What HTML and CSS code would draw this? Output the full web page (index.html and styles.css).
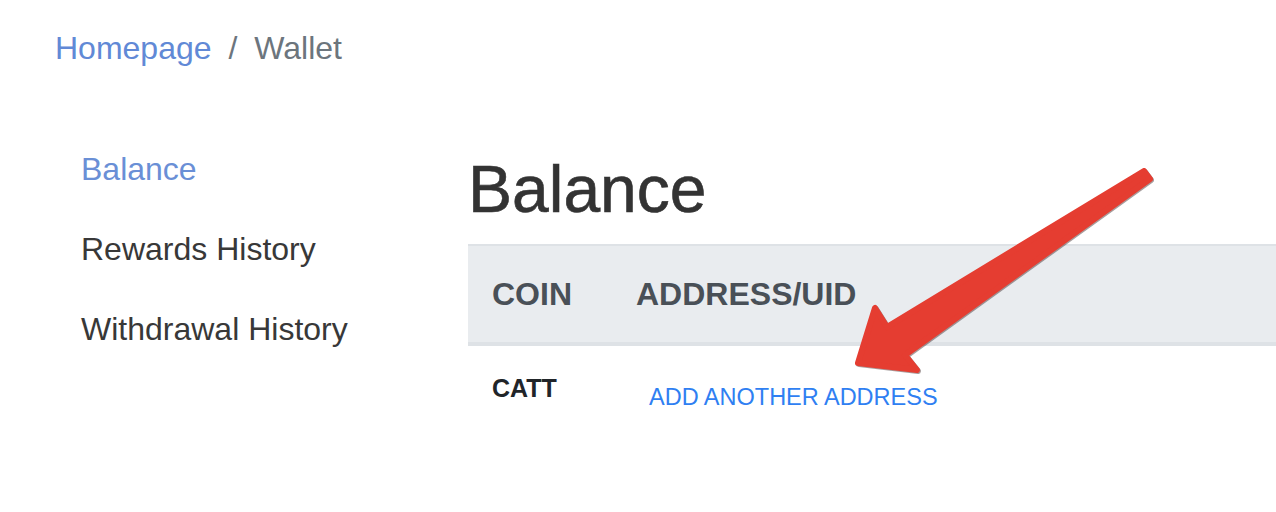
FILE: index.html
```html
<!DOCTYPE html>
<html lang="en">
<head>
    <meta charset="UTF-8">
    <meta name="viewport" content="width=device-width, initial-scale=1.0">
    <title>Wallet</title>
    <link rel="stylesheet" href="styles.css">
</head>
<body>
    <nav class="breadcrumb">
        <a href="#" class="crumb-link">Homepage</a>
        <span class="crumb-sep">/</span>
        <span class="crumb-current">Wallet</span>
    </nav>

    <div class="page">
        <ul class="sidebar">
            <li><a href="#" class="side-link active">Balance</a></li>
            <li><a href="#" class="side-link">Rewards History</a></li>
            <li><a href="#" class="side-link">Withdrawal History</a></li>
        </ul>

        <main class="content">
            <h2 class="title">Balance</h2>
            <table class="balance-table">
                <thead>
                    <tr>
                        <th class="col-coin">COIN</th>
                        <th>ADDRESS/UID</th>
                    </tr>
                </thead>
                <tbody>
                    <tr>
                        <td class="coin-name">CATT</td>
                        <td><a href="#" class="add-link">ADD ANOTHER ADDRESS</a></td>
                    </tr>
                </tbody>
            </table>
        </main>
    </div>

    <!-- annotation arrow drawn over the page -->
    <svg class="arrow" width="1276" height="512" viewBox="0 0 1276 512">
        <polygon points="1144,171 887,327 875,308 858,363 917,370 905,355 1150,179"
                 fill="#e53d31" stroke="#e53d31" stroke-width="6" stroke-linejoin="round"/>
    </svg>
</body>
</html>
```

FILE: styles.css
```css
body {
    font-family: 'Liberation Sans', Arial, sans-serif;
    margin: 0;
    padding: 0;
    color: #333333;
    background-color: #ffffff;
    position: relative;
    width: 1276px;
    height: 512px;
    overflow: hidden;
}

a {
    text-decoration: none;
}

.breadcrumb {
    padding: 24px 0 0 55px;
    font-size: 32px;
    line-height: 48px;
}

.crumb-link {
    color: #6189d6;
}

.crumb-sep {
    color: #6c757d;
    padding: 0 8px;
}

.crumb-current {
    color: #6c757d;
}

.page {
    display: flex;
    margin-top: 57px;
}

.sidebar {
    list-style: none;
    margin: 0;
    padding: 16px 0 0 81px;
    width: 468px;
    box-sizing: border-box;
    flex-shrink: 0;
}

.side-link {
    display: block;
    font-size: 32px;
    line-height: 48px;
    padding: 0 0 32px;
    color: #383838;
}

.side-link.active {
    color: #6a8fd6;
}

.content {
    flex: 1;
    min-width: 0;
    padding-top: 22px;
}

.title {
    margin: 0 0 16px;
    font-size: 66px;
    font-weight: 500;
    line-height: 77px;
    color: #333333;
    -webkit-text-stroke: 0.6px #333333;
}

.balance-table {
    width: 100%;
    border-collapse: collapse;
}

.balance-table th {
    text-align: left;
    font-size: 32px;
    line-height: 48px;
    font-weight: bold;
    color: #495057;
    background-color: #e9ecef;
    padding: 24px;
    border-top: 2px solid #dee2e6;
    border-bottom: 4px solid #dee2e6;
}

.balance-table th.col-coin {
    width: 96px;
}

.balance-table td {
    padding: 24px;
    vertical-align: top;
}

.coin-name {
    font-size: 25px;
    line-height: 37px;
    font-weight: bold;
    color: #212529;
}

.add-link {
    display: inline-block;
    margin: 10px 0 0 13px;
    font-size: 23.5px;
    line-height: 35px;
    color: #2f7ff2;
}

.arrow {
    position: absolute;
    top: 0;
    left: 0;
    pointer-events: none;
    filter: drop-shadow(1px 1.5px 0.6px rgba(60, 40, 40, 0.45));
}
```
